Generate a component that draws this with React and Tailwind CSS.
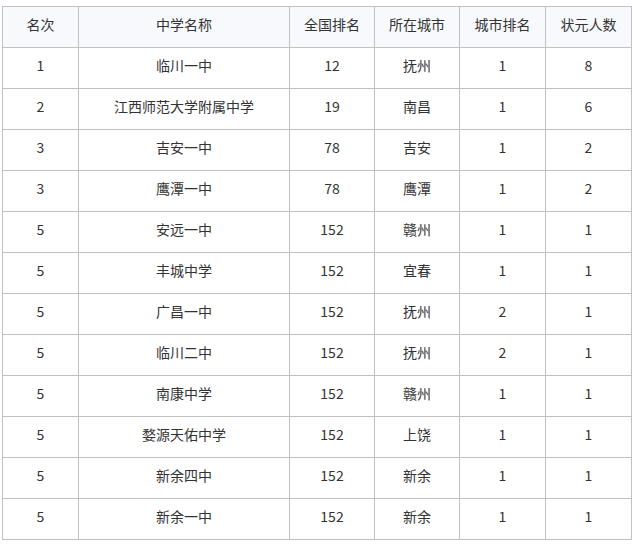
const rows = [
  ['1', '临川一中', '12', '抚州', '1', '8'],
  ['2', '江西师范大学附属中学', '19', '南昌', '1', '6'],
  ['3', '吉安一中', '78', '吉安', '1', '2'],
  ['3', '鹰潭一中', '78', '鹰潭', '1', '2'],
  ['5', '安远一中', '152', '赣州', '1', '1'],
  ['5', '丰城中学', '152', '宜春', '1', '1'],
  ['5', '广昌一中', '152', '抚州', '2', '1'],
  ['5', '临川二中', '152', '抚州', '2', '1'],
  ['5', '南康中学', '152', '赣州', '1', '1'],
  ['5', '婺源天佑中学', '152', '上饶', '1', '1'],
  ['5', '新余四中', '152', '新余', '1', '1'],
  ['5', '新余一中', '152', '新余', '1', '1'],
];

const headers = ['名次', '中学名称', '全国排名', '所在城市', '城市排名', '状元人数'];
const widths = [76, 211, 85, 85, 86, 86];

export default function App() {
  return (
    <div className="bg-white w-[635px] h-[545px] pt-[6px] pl-[2px] font-['Microsoft_YaHei','Noto_Sans_CJK_SC',sans-serif] text-[14px] text-[#333]">
      <table className="table-fixed border-collapse w-[630px]">
        <colgroup>
          {widths.map((w, i) => (
            <col key={i} style={{ width: w }} />
          ))}
        </colgroup>
        <thead>
          <tr className="bg-[#f7f9fd]">
            {headers.map((h) => (
              <th key={h} className="h-[41px] p-0 pb-[5px] border border-[#c1c1c1] font-normal text-center">
                {h}
              </th>
            ))}
          </tr>
        </thead>
        <tbody>
          {rows.map((r, i) => (
            <tr key={i}>
              {r.map((c, j) => (
                <td key={j} className="h-[41px] p-0 pb-[5px] border border-[#c1c1c1] text-center">
                  {c}
                </td>
              ))}
            </tr>
          ))}
        </tbody>
      </table>
    </div>
  );
}
